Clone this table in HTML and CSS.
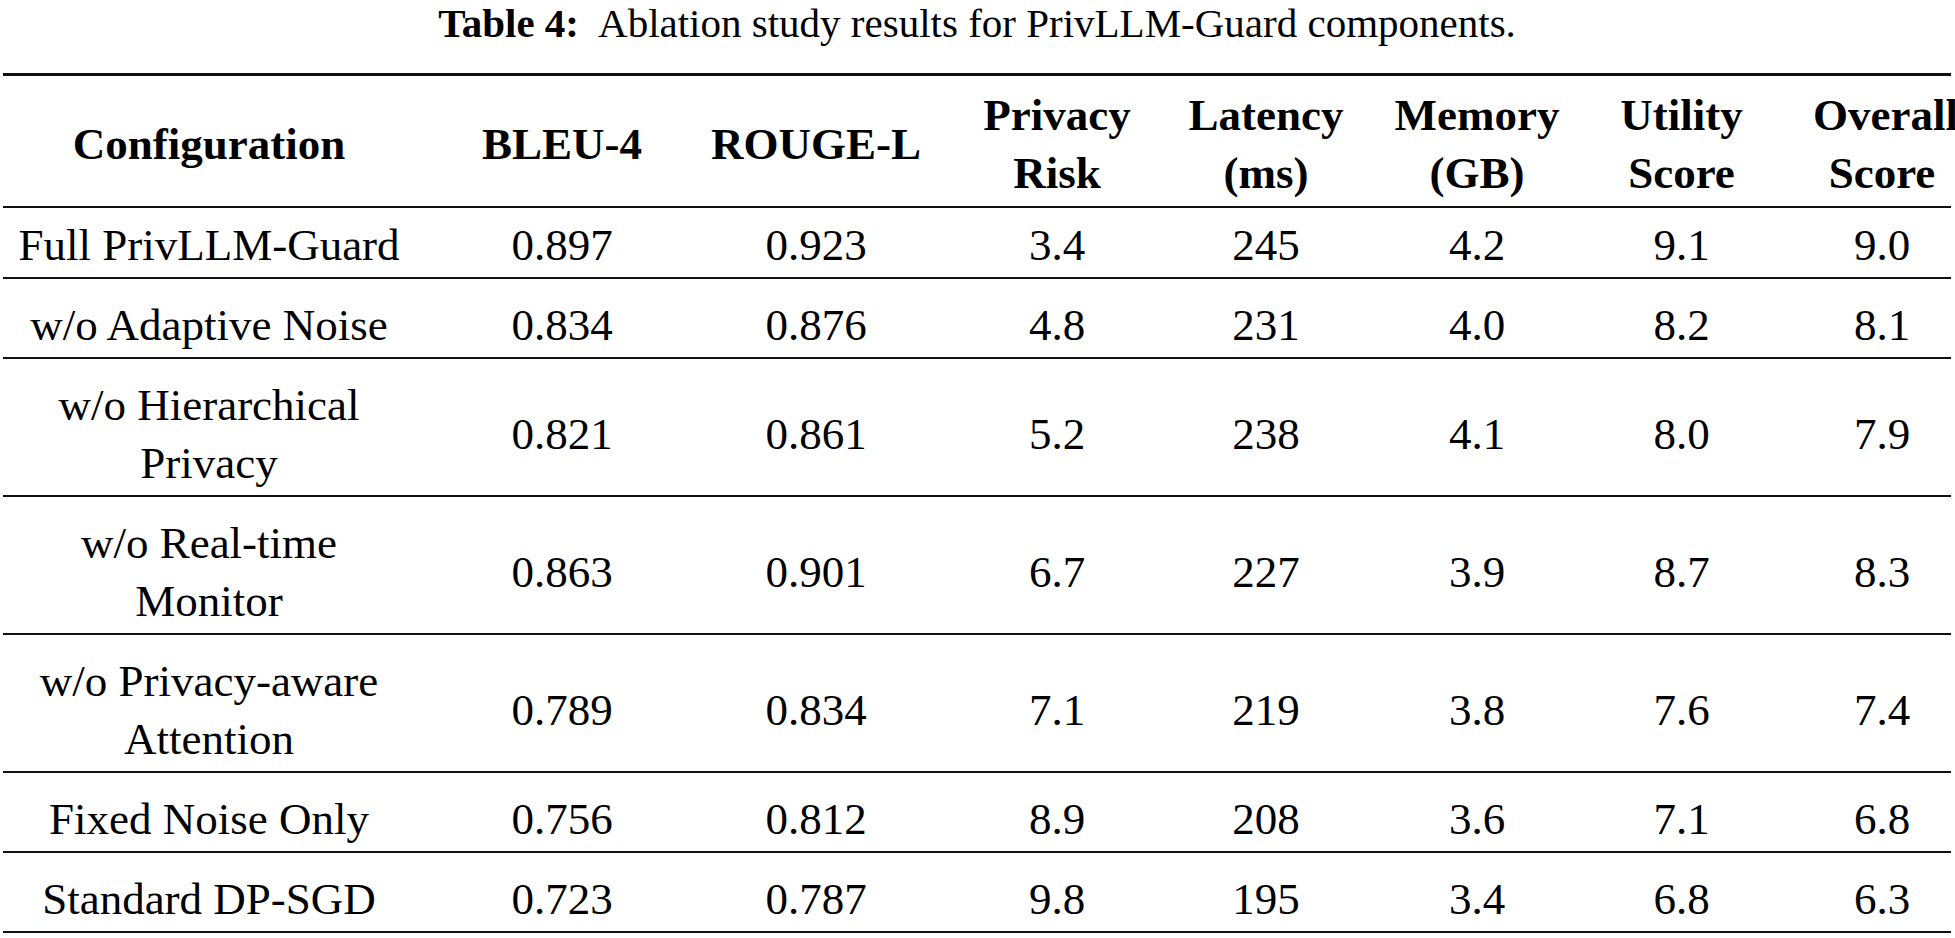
FILE: index.html
```html
<!DOCTYPE html>
<html lang="en">
<head>
<meta charset="utf-8">
<title>Table 4: Ablation study results for PrivLLM-Guard components</title>
<link rel="stylesheet" href="styles.css">
</head>
<body>
<table class="results">
  <caption class="results-caption"><span class="caption-label">Table 4:</span> Ablation study results for PrivLLM-Guard components.</caption>
  <colgroup>
    <col class="col-config">
    <col class="col-bleu">
    <col class="col-rouge">
    <col class="col-risk">
    <col class="col-latency">
    <col class="col-memory">
    <col class="col-utility">
    <col class="col-overall">
  </colgroup>
  <thead>
    <tr>
      <th>Configuration</th>
      <th>BLEU-4</th>
      <th>ROUGE-L</th>
      <th>Privacy Risk</th>
      <th>Latency (ms)</th>
      <th>Memory (GB)</th>
      <th>Utility Score</th>
      <th>Overall Score</th>
    </tr>
  </thead>
  <tbody>
    <tr>
      <td>Full PrivLLM-Guard</td>
      <td>0.897</td><td>0.923</td><td>3.4</td><td>245</td><td>4.2</td><td>9.1</td><td>9.0</td>
    </tr>
    <tr>
      <td>w/o Adaptive Noise</td>
      <td>0.834</td><td>0.876</td><td>4.8</td><td>231</td><td>4.0</td><td>8.2</td><td>8.1</td>
    </tr>
    <tr>
      <td>w/o Hierarchical Privacy</td>
      <td>0.821</td><td>0.861</td><td>5.2</td><td>238</td><td>4.1</td><td>8.0</td><td>7.9</td>
    </tr>
    <tr>
      <td>w/o Real-time Monitor</td>
      <td>0.863</td><td>0.901</td><td>6.7</td><td>227</td><td>3.9</td><td>8.7</td><td>8.3</td>
    </tr>
    <tr>
      <td>w/o Privacy-aware Attention</td>
      <td>0.789</td><td>0.834</td><td>7.1</td><td>219</td><td>3.8</td><td>7.6</td><td>7.4</td>
    </tr>
    <tr>
      <td>Fixed Noise Only</td>
      <td>0.756</td><td>0.812</td><td>8.9</td><td>208</td><td>3.6</td><td>7.1</td><td>6.8</td>
    </tr>
    <tr>
      <td>Standard DP-SGD</td>
      <td>0.723</td><td>0.787</td><td>9.8</td><td>195</td><td>3.4</td><td>6.8</td><td>6.3</td>
    </tr>
  </tbody>
</table>
</body>
</html>
```

FILE: styles.css
```css
html,
body {
  margin: 0;
  padding: 0;
  background: #ffffff;
}

body {
  overflow: hidden;
  font-family: "Liberation Serif", "Times New Roman", serif;
  color: #000000;
}

.results {
  margin-left: 3px;
  width: 1948px;
  table-layout: fixed;
  border-collapse: separate;
  border-spacing: 0;
  font-size: 45px;
  line-height: 58px;
}

.results-caption {
  caption-side: top;
  font-size: 41px;
  line-height: 46px;
  padding-bottom: 27px;
  text-align: center;
  white-space: nowrap;
}

.caption-label {
  font-weight: 700;
  margin-right: 11px;
}

.results thead th {
  border-top: 3px solid #111111;
  border-bottom: 2px solid #111111;
  padding: 10px 0 4px;
  font-weight: 700;
  text-align: center;
  vertical-align: middle;
}

.results td {
  padding: 17px 0 3px;
  border-bottom: 2px solid #111111;
  text-align: center;
  vertical-align: middle;
  font-weight: 400;
}

.results tbody tr:first-child td {
  padding-top: 8px;
}

.col-config { width: 412px; }
.col-bleu { width: 274px; }
.col-rouge { width: 248px; }
.col-risk { width: 224px; }
.col-latency { width: 210px; }
.col-memory { width: 209px; }
.col-utility { width: 203px; }
.col-overall { width: 168px; }

.results th:nth-child(1),
.results td:nth-child(1) {
  padding-left: 12px;
  padding-right: 12px;
}

.results th:nth-child(2),
.results td:nth-child(2) {
  padding-left: 20px;
}

.results th:nth-child(3),
.results td:nth-child(3) {
  padding-left: 6px;
}

.results th:nth-child(4),
.results td:nth-child(4) {
  padding-left: 16px;
}

.results th:nth-child(6),
.results td:nth-child(6) {
  padding-left: 3px;
}

.results th:nth-child(8),
.results td:nth-child(8) {
  padding-left: 30px;
}
```
